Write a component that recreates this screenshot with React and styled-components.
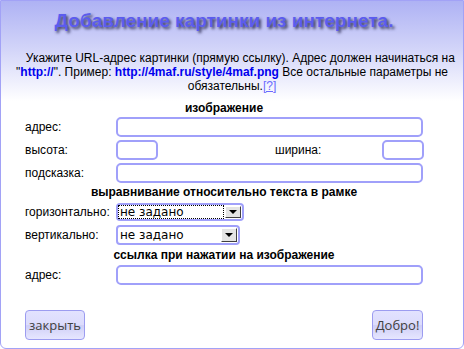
import React from "react";
import styled, { createGlobalStyle } from "styled-components";

const GlobalStyle = createGlobalStyle`
  html, body {
    margin: 0;
    padding: 0;
    background: #ffffff;
  }
  body {
    font-family: "Liberation Sans", Arial, sans-serif;
  }
`;

const Panel = styled.div`
  box-sizing: border-box;
  width: 464px;
  height: 349px;
  border: 1px solid #a2a2f6;
  border-radius: 0 0 6px 6px;
  background: linear-gradient(to bottom, #aeb2f4 0px, #d4d6f9 50px, #ffffff 100px);
  display: flex;
  flex-direction: column;
`;

const Title = styled.h1`
  margin: 7px 0 0;
  padding-right: 16px;
  height: 26px;
  line-height: 26px;
  text-align: center;
  font-family: "Liberation Sans", Arial, sans-serif;
  font-weight: bold;
  font-size: 19px;
  color: #5b5cee;
  text-shadow: 2px 2px 3px #3a3a60;
`;

const Intro = styled.p`
  margin: 17px 0 0;
  padding: 0 8px;
  text-align: center;
  font-size: 12px;
  line-height: 14px;
  color: #000000;
`;

const Link = styled.a`
  color: #0000ee;
  font-weight: bold;
  text-decoration: none;
`;

const Help = styled.a`
  color: #6a6aff;
  text-decoration: underline;
`;

const Form = styled.div`
  margin: 8px 40px 0 24px;
  display: flex;
  flex-direction: column;
`;

const Heading = styled.div`
  height: 14px;
  line-height: 14px;
  margin-top: ${(p) => p.$top || 0}px;
  text-align: center;
  font-weight: bold;
  font-size: 12px;
  color: #000;
`;

const Row = styled.div`
  display: flex;
  align-items: center;
  height: ${(p) => p.$h || 20}px;
  margin-top: ${(p) => p.$top || 0}px;
`;

const Label = styled.span`
  width: ${(p) => (p.$w ? `${p.$w}px` : "91px")};
  margin-left: ${(p) => p.$ml || 0}px;
  flex-shrink: 0;
  font-size: 12px;
  color: #000;
`;

const Input = styled.div`
  box-sizing: border-box;
  height: 20px;
  width: ${(p) => (p.$w ? `${p.$w}px` : "auto")};
  flex: ${(p) => (p.$w ? "none" : "1")};
  border: 2px solid #a0a0fa;
  border-radius: 5px;
  background: #fff;
`;

const Select = styled.div`
  box-sizing: border-box;
  width: ${(p) => p.$w}px;
  height: ${(p) => p.$h}px;
  border: 2px solid #a0a0fa;
  border-radius: 4px;
  background: #fff;
  display: flex;
  align-items: stretch;
`;

const SelectText = styled.span`
  flex: 1;
  display: flex;
  align-items: center;
  padding-left: 1px;
  font-family: "DejaVu Sans", sans-serif;
  font-size: 12px;
  color: #000;
  border: 1px dotted ${(p) => (p.$focus ? "#000" : "transparent")};
  margin-right: 1px;
`;

const Arrow = styled.span`
  box-sizing: border-box;
  width: 16px;
  margin: 1px 1px 1px 0;
  background: #e4e4e4;
  border-top: 1px solid #fff;
  border-left: 1px solid #fff;
  border-right: 1px solid #404040;
  border-bottom: 1px solid #404040;
  display: flex;
  align-items: center;
  justify-content: center;
  &::after {
    content: "";
    border-left: 4px solid transparent;
    border-right: 4px solid transparent;
    border-top: 4px solid #000;
  }
`;

const Buttons = styled.div`
  display: flex;
  justify-content: space-between;
  margin-top: 25px;
`;

const Button = styled.button`
  box-sizing: border-box;
  height: 30px;
  width: ${(p) => p.$w}px;
  padding: 0;
  border: 1px solid #9c9cf0;
  border-radius: 4px;
  background: linear-gradient(to bottom, #e2e2ff 0%, #dcdcfc 50%, #cfcff6 52%, #e6e6ff 100%);
  font-family: "Open Sans", sans-serif;
  font-size: 13px;
  color: #404040;
`;

export default function App() {
  return (
    <>
      <GlobalStyle />
      <Panel>
        <Title>Добавление картинки из интернета.</Title>
        <Intro>
          &nbsp;&nbsp;&nbsp;&nbsp;&nbsp;Укажите URL-адрес картинки (прямую ссылку). Адрес должен начинаться на "
          <Link>http://</Link>". Пример: <Link>http://4maf.ru/style/4maf.png</Link> Все остальные
          параметры не обязательны.<Help>[?]</Help>
        </Intro>
        <Form>
          <Heading>изображение</Heading>
          <Row $top={2}>
            <Label>адрес:</Label>
            <Input />
          </Row>
          <Row $top={3}>
            <Label>высота:</Label>
            <Input $w={42} />
            <Label $w={107} $ml={117}>ширина:</Label>
            <Input $w={42} />
          </Row>
          <Row $top={3}>
            <Label>подсказка:</Label>
            <Input />
          </Row>
          <Heading $top={2}>выравнивание относительно текста в рамке</Heading>
          <Row $top={4} $h={18}>
            <Label>горизонтально:</Label>
            <Select $w={128} $h={18}>
              <SelectText $focus>не задано</SelectText>
              <Arrow />
            </Select>
          </Row>
          <Row $top={4} $h={20}>
            <Label>вертикально:</Label>
            <Select $w={124} $h={20}>
              <SelectText>не задано</SelectText>
              <Arrow />
            </Select>
          </Row>
          <Heading $top={3}>ссылка при нажатии на изображение</Heading>
          <Row $top={3}>
            <Label>адрес:</Label>
            <Input />
          </Row>
          <Buttons>
            <Button $w={60}>закрыть</Button>
            <Button $w={51}>Добро!</Button>
          </Buttons>
        </Form>
      </Panel>
    </>
  );
}
